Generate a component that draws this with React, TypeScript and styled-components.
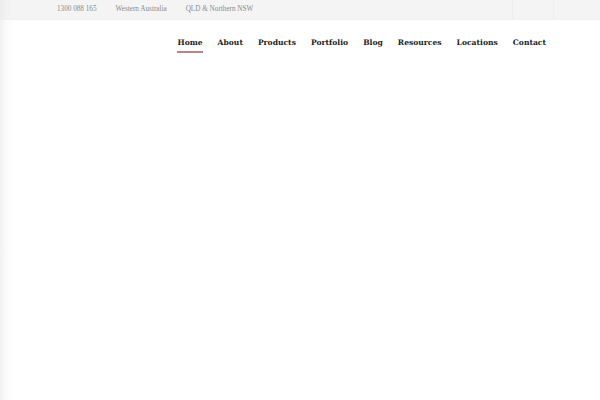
import React from "react";
import styled, { createGlobalStyle } from "styled-components";

const GlobalStyle = createGlobalStyle`
  html, body {
    margin: 0;
    padding: 0;
    background: #ffffff;
  }
  #root {
    min-height: 100vh;
  }
`;

// Style
const Page = styled.div`
  min-height: 100vh;
  background: linear-gradient(to right, #f1f1f1 0px, #fafafa 6px, #ffffff 14px);
`;

const TopBar = styled.div`
  height: 19px;
  background: linear-gradient(to right, #ececec 0px, #f4f4f4 10px);
  border-bottom: 1px solid #f0f0f0;
  display: flex;
  align-items: center;
  justify-content: space-between;
  padding-left: 57px;
`;

const Contacts = styled.ul`
  list-style: none;
  margin: 0;
  padding: 0;
  display: flex;
  gap: 19px;
  li {
    font-family: "Liberation Serif", serif;
    font-size: 7.2px;
    color: #8a8a8a;
    line-height: 19px;
  }
`;

const Socials = styled.div`
  display: flex;
  height: 19px;
  margin-right: 6px;
`;

const SocialSlot = styled.span`
  width: 40px;
  height: 19px;
  border-left: 1px solid #eeeeee;
`;

const Header = styled.header`
  height: 44px;
  display: flex;
  justify-content: flex-end;
  align-items: flex-start;
  padding-right: 54px;
`;

const Nav = styled.ul`
  list-style: none;
  margin: 0;
  padding: 0;
  display: flex;
  gap: 15px;
  margin-top: 18px;
`;

const NavItem = styled.li<{ $active?: boolean }>`
  font-family: "DejaVu Serif", serif;
  font-weight: bold;
  font-size: 7.6px;
  color: #1b1b1b;
  line-height: 10px;
  padding-bottom: 3px;
  border-bottom: 2px solid ${(p) => (p.$active ? "#b98588" : "transparent")};
`;

const links = [
  "Home",
  "About",
  "Products",
  "Portfolio",
  "Blog",
  "Resources",
  "Locations",
  "Contact",
];

function App() {
  return (
    <Page>
      <GlobalStyle />
      <TopBar>
        <Contacts>
          <li>1300 088 165</li>
          <li>Western Australia</li>
          <li>QLD &amp; Northern NSW</li>
        </Contacts>
        <Socials>
          <SocialSlot />
          <SocialSlot />
        </Socials>
      </TopBar>
      <Header>
        <Nav>
          {links.map((l, i) => (
            <NavItem key={l} $active={i === 0}>
              {l}
            </NavItem>
          ))}
        </Nav>
      </Header>
    </Page>
  );
}

export default App;
